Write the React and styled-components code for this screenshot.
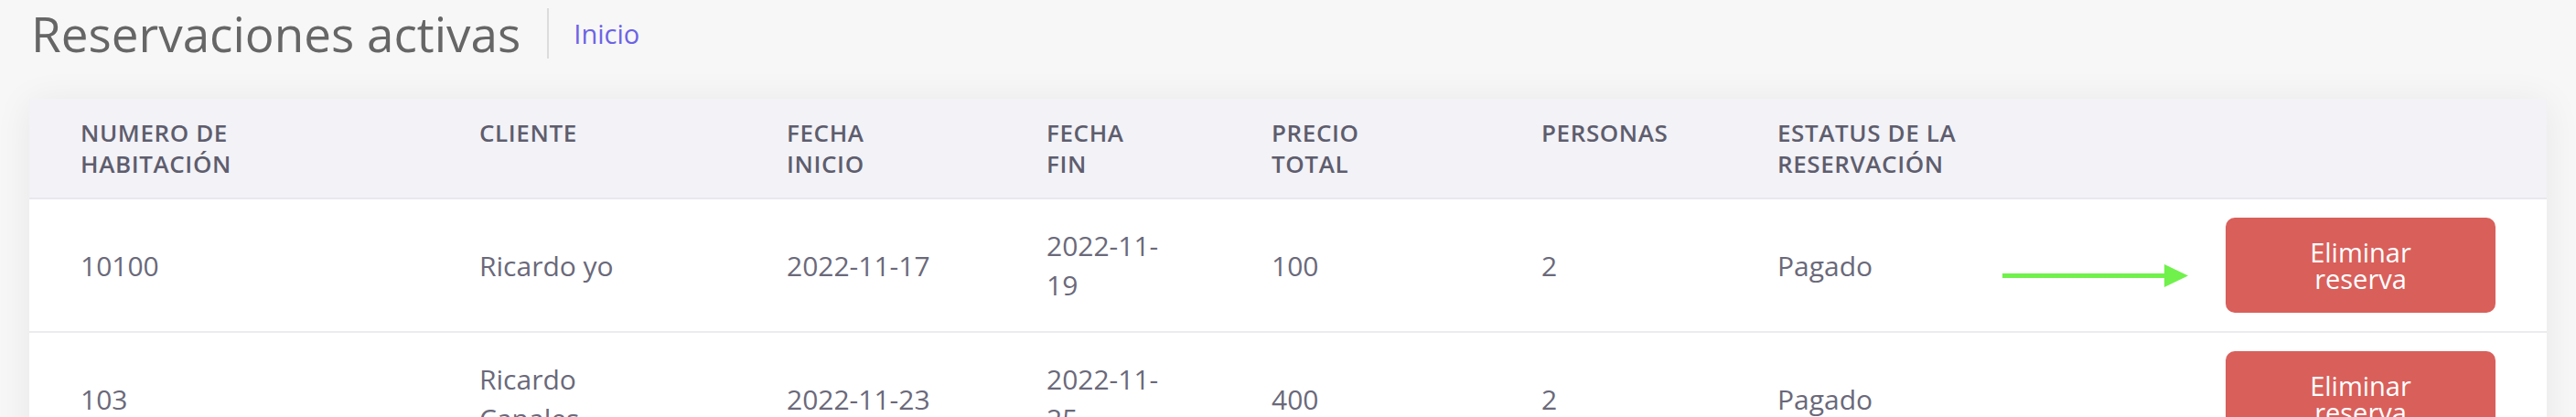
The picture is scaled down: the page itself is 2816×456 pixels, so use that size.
import React from 'react'
import styled, { createGlobalStyle } from 'styled-components'

const GlobalStyle = createGlobalStyle`
    body {
        margin: 0;
        background: #f7f7f7;
        font-family: "Open Sans", "Noto Sans", sans-serif;
    }
`

// column track widths and the max width the text may take inside each one
const columns = [
    { track: 436, max: 260 },
    { track: 336, max: 200 },
    { track: 284, max: 170 },
    { track: 246, max: 130 },
    { track: 295, max: 150 },
    { track: 258, max: 220 },
    { track: 490, max: 260 },
    { track: 295, max: 295 },
]

const headers = [
    'Numero de habitación',
    'Cliente',
    'Fecha inicio',
    'Fecha fin',
    'Precio total',
    'Personas',
    'Estatus de la reservación',
    '',
]

const reservas = [
    { habitacion: '10100', cliente: 'Ricardo yo', inicio: '2022-11-17', fin: '2022-11-19', precio: 100, personas: 2, estatus: 'Pagado', marcada: true },
    { habitacion: '103', cliente: 'Ricardo Canales', inicio: '2022-11-23', fin: '2022-11-25', precio: 400, personas: 2, estatus: 'Pagado' },
]

const Arrow = () => (
    <ArrowMark width="203" height="25" viewBox="0 0 203 25">
        <rect x="0" y="10" width="180" height="5" fill="#70f14b" />
        <polygon points="177,0 203,12.5 177,25" fill="#70f14b" />
    </ArrowMark>
)

export default function App() {
    return (
        <Page>
            <GlobalStyle />
            <TitleBar>
                <Title>Reservaciones activas</Title>
                <Divider />
                <Crumb href="#">Inicio</Crumb>
            </TitleBar>
            <Card>
                <HeadRow>
                    {headers.map((h, i) => (
                        <HeadCell key={i} $max={columns[i].max}>{h}</HeadCell>
                    ))}
                </HeadRow>
                {reservas.map((r) => (
                    <Row key={r.habitacion}>
                        <Cell $max={columns[0].max}>{r.habitacion}</Cell>
                        <Cell $max={columns[1].max}>{r.cliente}</Cell>
                        <Cell $max={columns[2].max}>{r.inicio}</Cell>
                        <Cell $max={columns[3].max}>{r.fin}</Cell>
                        <Cell $max={columns[4].max}>{r.precio}</Cell>
                        <Cell $max={columns[5].max}>{r.personas}</Cell>
                        <Cell $max={columns[6].max}>{r.estatus}</Cell>
                        <ActionCell>
                            {r.marcada && <Arrow />}
                            <DeleteButton>Eliminar<br />reserva</DeleteButton>
                        </ActionCell>
                    </Row>
                ))}
            </Card>
        </Page>
    )
}

const Page = styled.div`
    padding: 0 32px;
`

const TitleBar = styled.div`
    display: flex;
    align-items: center;
    height: 72px;
    margin-bottom: 36px;
`

const Title = styled.h1`
    margin: 0;
    font-size: 53px;
    line-height: 53px;
    font-weight: 400;
    color: #666666;
    padding-left: 2px;
`

const Divider = styled.div`
    width: 2px;
    height: 55px;
    background: #dcdcdc;
    margin: 0 27px 0 29px;
`

const Crumb = styled.a`
    font-size: 29px;
    color: #6c63e5;
    text-decoration: none;
`

const Card = styled.div`
    background: #ffffff;
    border-radius: 3px;
    box-shadow: 0 4px 40px rgba(0, 0, 0, 0.07);
`

const grid = `
    display: grid;
    grid-template-columns: ${columns.map(c => c.track + 'px').join(' ')};
    padding: 0 56px;
`

const HeadRow = styled.div`
    ${grid}
    background: #f2f2f7;
    padding-top: 20px;
    padding-bottom: 20px;
    border-bottom: 2px solid #e8e8ee;
`

const HeadCell = styled.div`
    max-width: ${p => p.$max}px;
    font-size: 26px;
    line-height: 34px;
    font-weight: 600;
    letter-spacing: 0.6px;
    text-transform: uppercase;
    color: #5e5d6d;
`

const Row = styled.div`
    ${grid}
    position: relative;
    align-items: center;
    padding-top: 20px;
    padding-bottom: 20px;
    border-bottom: 2px solid #ebebf0;
`

const Cell = styled.div`
    max-width: ${p => p.$max}px;
    font-size: 30px;
    line-height: 43px;
    color: #6a697a;
`

const ActionCell = styled.div`
    position: relative;
    display: flex;
    justify-content: flex-end;
`

const ArrowMark = styled.svg`
    position: absolute;
    left: -244px;
    top: 51px;
`

const DeleteButton = styled.button`
    width: 295px;
    padding: 23px 16px;
    border: none;
    border-radius: 10px;
    background: #d95f5b;
    color: #ffffff;
    font-family: inherit;
    font-size: 29px;
    font-weight: 500;
    line-height: 29px;
    cursor: pointer;
`
